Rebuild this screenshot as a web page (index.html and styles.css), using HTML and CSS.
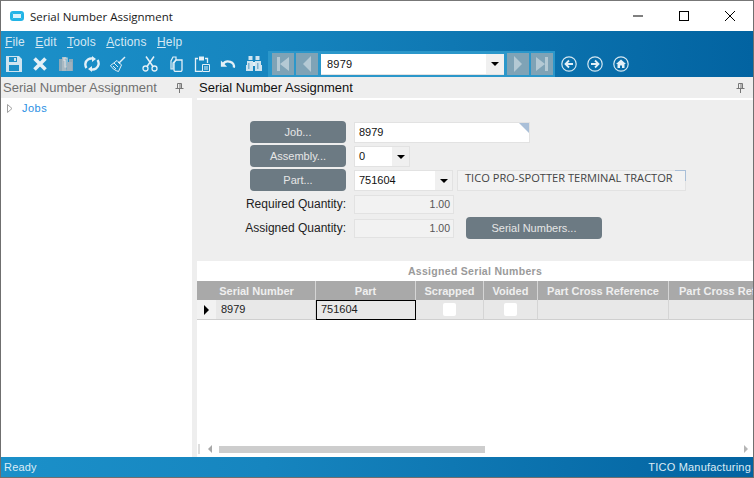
FILE: index.html
```html
<!DOCTYPE html>
<html lang="en">
<head>
<meta charset="utf-8">
<title>Serial Number Assignment</title>
<link rel="stylesheet" href="styles.css">
</head>
<body>
<div class="window">
  <header class="titlebar">
    <span class="app-icon"></span>
    <span class="app-title">Serial Number Assignment</span>
    <div class="win-controls">
      <svg class="win-btn" viewBox="0 0 46 30"><path d="M18 15h10" stroke="#000" fill="none"/></svg>
      <svg class="win-btn" viewBox="0 0 46 30"><rect x="18.5" y="10.5" width="9" height="9" stroke="#000" fill="none"/></svg>
      <svg class="win-btn" viewBox="0 0 46 30"><path d="M18 10l10 10M28 10l-10 10" stroke="#000" fill="none"/></svg>
    </div>
  </header>

  <div class="ribbon">
    <nav class="menu">
      <span class="menu-item"><u>F</u>ile</span>
      <span class="menu-item"><u>E</u>dit</span>
      <span class="menu-item"><u>T</u>ools</span>
      <span class="menu-item"><u>A</u>ctions</span>
      <span class="menu-item"><u>H</u>elp</span>
    </nav>
    <div class="toolbar">
      <span class="tool"><svg viewBox="0 0 16 16"><path class="ifill" fill-rule="evenodd" d="M0 0h13l3 3v13H0zM3 1v5h8V1zM3 9v6h10V9z"/><path class="ifill" d="M8 2h2v3H8z"/></svg></span>
      <span class="tool"><svg viewBox="0 0 16 16"><path d="M2.500 2.500l11 11M13.500 2.500l-11 11" stroke="#e4f0f7" stroke-width="3.600" fill="none"/></svg></span>
      <span class="tool"><svg viewBox="0 0 16 16"><path d="M1 3h3v12H1zM11 3h4v12h-4z" fill="#8fa9b8"/><path d="M4 1h4v14H4z" fill="#a9b9c2"/><path d="M6 5V2h3v9H7V4" stroke="#d5dde2" fill="none" stroke-width="1.200"/><path d="M9 6h5v9H8z" fill="#9fb2be"/></svg></span>
      <span class="tool"><svg viewBox="0 0 16 16"><path d="M2.500 12A6 6 0 0 1 4 3.500 6 6 0 0 1 8 2.500M13.500 4A6 6 0 0 1 12 12.500 6 6 0 0 1 8 13.500" stroke="#e4f0f7" stroke-width="2.400" fill="none"/><path d="M8 0v6l4-3zM8 16v-6l-4 3z" fill="#e4f0f7"/></svg></span>
      <span class="tool"><svg viewBox="0 0 16 16"><path d="M9 7l6-6" stroke="#e4f0f7" stroke-width="1.500" fill="none"/><path d="M7 4.500l4.500 4.500-3 6.500C6 15 1.500 12 .5 9.500z" fill="none" stroke="#e4f0f7"/><path d="M4 7l4 4M3 10l3 3M8 6l2 2" stroke="#e4f0f7" fill="none"/></svg></span>
      <span class="tool tool-group"><svg viewBox="0 0 16 16"><circle cx="3.500" cy="12.500" r="2.500" fill="none" stroke="#e4f0f7" stroke-width="1.300"/><circle cx="12.500" cy="12.500" r="2.500" fill="none" stroke="#e4f0f7" stroke-width="1.300"/><path d="M5 10.500L12 .5M11 10.500L4 .5" stroke="#e4f0f7" stroke-width="1.500" fill="none"/></svg></span>
      <span class="tool"><svg viewBox="0 0 16 16"><path d="M5 1h3v3L5 7v6H3V5z" fill="none" stroke="#e4f0f7" stroke-width="1.200"/><path d="M8 4h3l3 0v10a1.500 1.500 0 0 1-1.500 1.500h-5A1.500 1.500 0 0 1 6 14V7z" fill="none" stroke="#e4f0f7" stroke-width="1.300"/></svg></span>
      <span class="tool"><svg viewBox="0 0 16 16"><path d="M4 2.500H1.500v13H8M11 2.500h2.500V7" fill="none" stroke="#e4f0f7" stroke-width="1.300"/><path d="M5 .5h5v4H5z" fill="#e4f0f7"/><path d="M8.500 8.500h7v7h-7z" fill="none" stroke="#e4f0f7"/><path d="M10 11h4M10 13h4" stroke="#e4f0f7"/></svg></span>
      <span class="tool"><svg viewBox="0 0 18 16"><path d="M3.500 8A6.500 5.500 0 0 1 15.500 12" stroke="#e4f0f7" stroke-width="2.600" fill="none"/><path d="M1 4v7h7z" fill="#e4f0f7"/></svg></span>
      <span class="tool"><svg viewBox="0 0 16 16"><path class="ifill" d="M2.500 0h4v4h-4zM9.500 0h4v4h-4zM1 5h6v4H1zM9 5h6v4H9zM0 9h7v6H0zM9 9h7v6H9z"/><path d="M7 6h2v4H7z" fill="#e4f0f7"/><path d="M2 7h1.500v6H2zM11 7h1.500v6H11z" fill="#7fb2cf"/></svg></span>

      <div class="nav-box">
        <span class="nav-btn"><svg viewBox="0 0 22 22"><path class="nfill" d="M5 4h3v14H5zM17 4v14l-9-7z"/></svg></span>
        <span class="nav-btn"><svg viewBox="0 0 22 22"><path class="nfill" d="M15 3v16L7 11z"/></svg></span>
        <div class="nav-combo">
          <span class="nav-value">8979</span>
          <span class="nav-caret"></span>
        </div>
        <span class="nav-btn"><svg viewBox="0 0 22 22"><path class="nfill" d="M7 3v16l8-8z"/></svg></span>
        <span class="nav-btn"><svg viewBox="0 0 22 22"><path class="nfill" d="M5 4v14l9-7zM14 4h3v14h-3z"/></svg></span>
      </div>

      <div class="round-tools">
        <svg class="round" viewBox="0 0 16 16"><circle cx="8" cy="8" r="7.200" fill="none" stroke="#d5e8f2" stroke-width="1.200"/><path d="M12 8H5M8 4.500L4.500 8 8 11.500" fill="none" stroke="#e4f0f7" stroke-width="1.800"/></svg>
        <svg class="round" viewBox="0 0 16 16"><circle cx="8" cy="8" r="7.200" fill="none" stroke="#d5e8f2" stroke-width="1.200"/><path d="M4 8h7M8 4.500L11.500 8 8 11.500" fill="none" stroke="#e4f0f7" stroke-width="1.800"/></svg>
        <svg class="round" viewBox="0 0 16 16"><circle cx="8" cy="8" r="7.200" fill="none" stroke="#d5e8f2" stroke-width="1.200"/><path d="M8 3.500L3 8h1.500v4h2.500V9.500h2V12h2.500V8H13z" fill="#e4f0f7"/></svg>
      </div>
    </div>
  </div>

  <main class="workspace">
    <aside class="side">
      <div class="pane-head side-head">
        <span>Serial Number Assignment</span>
        <svg class="pin" viewBox="0 0 9 10"><path d="M2.500 .5h4v5h-4zM.5 5.500h8M4.500 6v4M5 1v4" fill="none" stroke="#777"/></svg>
      </div>
      <div class="tree">
        <svg class="tree-arrow" viewBox="0 0 6 9"><path d="M.5 .5l4.500 4-4.500 4z" fill="none" stroke="#a0a0a0"/></svg>
        <span class="tree-label">Jobs</span>
      </div>
    </aside>

    <section class="content">
      <div class="pane-head main-head">
        <span>Serial Number Assignment</span>
        <svg class="pin" viewBox="0 0 9 10"><path d="M2.500 .5h4v5h-4zM.5 5.500h8M4.500 6v4M5 1v4" fill="none" stroke="#777"/></svg>
      </div>

      <form class="form">
        <div class="form-row">
          <span class="btn btn-label">Job...</span>
          <div class="field field-job corner"><span>8979</span></div>
        </div>
        <div class="form-row">
          <span class="btn btn-label">Assembly...</span>
          <div class="field field-asm"><span>0</span><span class="caret-box"><i class="caret"></i></span></div>
        </div>
        <div class="form-row">
          <span class="btn btn-label">Part...</span>
          <div class="field field-part"><span>751604</span><span class="caret-box"><i class="caret"></i></span></div>
          <div class="desc">TICO PRO-SPOTTER TERMINAL TRACTOR</div>
        </div>
        <div class="form-row">
          <label class="qty-label">Required Quantity:</label>
          <div class="qty">1.00</div>
        </div>
        <div class="form-row">
          <label class="qty-label">Assigned Quantity:</label>
          <div class="qty">1.00</div>
          <span class="btn btn-serial">Serial Numbers...</span>
        </div>
      </form>

      <div class="grid-panel">
        <div class="grid-title">Assigned Serial Numbers</div>
        <div class="grid">
          <div class="gh gh-serial">Serial Number</div>
          <div class="gh">Part</div>
          <div class="gh">Scrapped</div>
          <div class="gh">Voided</div>
          <div class="gh">Part Cross Reference</div>
          <div class="gh gh-clip">Part Cross Reference</div>

          <div class="gc gc-mark"><i class="row-mark"></i></div>
          <div class="gc gc-text">8979</div>
          <div class="gc gc-text gc-active">751604</div>
          <div class="gc gc-check"><i class="check"></i></div>
          <div class="gc gc-check"><i class="check"></i></div>
          <div class="gc"></div>
          <div class="gc"></div>
        </div>
        <div class="hscroll">
          <i class="sb-stub"></i>
          <i class="sb-left"></i>
          <i class="sb-thumb"></i>
          <i class="sb-right"></i>
        </div>
      </div>
    </section>
  </main>

  <footer class="status">
    <span>Ready</span>
    <span>TICO Manufacturing</span>
  </footer>
</div>
</body>
</html>
```

FILE: styles.css
```css
* { box-sizing: border-box; }
html, body { margin: 0; padding: 0; background: #fff; }
body { font-family: "Liberation Sans", Arial, sans-serif; font-size: 12px; color: #222; }

.window {
  width: 754px;
  height: 478px;
  display: flex;
  flex-direction: column;
  border: 1px solid #6f6f6f;
  border-top-color: #777;
  overflow: hidden;
  background: #fff;
}

.titlebar {
  height: 30px;
  flex: none;
  display: flex;
  align-items: center;
  background: #fff;
  padding-left: 9px;
}
.app-icon {
  width: 14px;
  height: 10px;
  border: 2px solid #22b4e6;
  border-radius: 3px;
  background: #d9f2fb;
  box-shadow: inset 0 0 0 1px #22b4e6;
}
.app-title {
  margin-left: 6px;
  font-family: "Open Sans", sans-serif;
  font-size: 11.500px;
  color: #1a1a1a;
}
.win-controls { margin-left: auto; display: flex; }
.win-btn { width: 46px; height: 30px; display: block; }

.ribbon {
  height: 46px;
  flex: none;
  background: linear-gradient(90deg, #1b90c9 0%, #1685bf 35%, #0f78b3 60%, #0263a1 100%);
}
.menu {
  height: 20px;
  display: flex;
  align-items: center;
  padding: 2px 0 0 4px;
  gap: 10.400px;
}
.menu-item { color: #d5e8f3; font-size: 12px; letter-spacing: .15px; }

.toolbar { height: 26px; display: flex; align-items: flex-start; }
.tool {
  width: 26px;
  height: 26px;
  display: flex;
  align-items: center;
  justify-content: center;
  flex: none;
}
.tool svg { width: 16px; height: 16px; display: block; }
.tool-group { margin-left: 6px; }
.ifill { fill: #cfe4f0; }
.nfill { fill: #b4c9d4; }

.nav-box {
  width: 287px;
  height: 26px;
  margin-left: 1px;
  background: #2b97ca;
  display: flex;
  align-items: center;
  padding: 0 3px 0 4px;
  gap: 2px;
  flex: none;
}
.nav-btn {
  width: 22px;
  height: 22px;
  background: #7fa3b6;
  display: block;
  flex: none;
}
.nav-btn svg { width: 22px; height: 22px; display: block; }
.nav-combo {
  width: 183px;
  height: 21px;
  margin: 0 1px;
  background: #fff;
  border-bottom: 1px solid #e3e3e3;
  display: flex;
  align-items: center;
  justify-content: space-between;
  flex: none;
}
.nav-value { padding-left: 6px; color: #111; font-size: 11px; letter-spacing: .2px; }
.nav-caret {
  width: 18px;
  height: 20px;
  background: #f0f0f0;
  position: relative;
}
.nav-caret::after, .caret {
  content: "";
  position: absolute;
  left: 5px;
  top: 8px;
  border-left: 4px solid transparent;
  border-right: 4px solid transparent;
  border-top: 4px solid #000;
}

.round-tools {
  display: flex;
  gap: 10px;
  margin-left: 6px;
  padding-top: 5px;
}
.round { width: 16px; height: 16px; display: block; }

.workspace { flex: 1; min-height: 0; display: flex; }

.side { width: 191px; flex: none; background: #fff; }
.pane-head {
  height: 21px;
  background: #eee;
  display: flex;
  align-items: center;
  justify-content: space-between;
  font-size: 13px;
}
.side-head { padding: 0 8px 0 2px; color: #707070; }
.main-head { padding: 0 8px 0 2px; color: #111; }
.pin { width: 9px; height: 10px; display: block; }

.tree { display: flex; align-items: center; padding: 4px 0 0 6px; }
.tree-arrow { width: 6px; height: 9px; display: block; }
.tree-label { margin-left: 9px; color: #2b8fe3; font-size: 11px; letter-spacing: .5px; }

.content {
  flex: 1;
  min-width: 0;
  display: flex;
  flex-direction: column;
  border-left: 5px solid #eee;
}

.form {
  margin-top: 2px;
  height: 161px;
  flex: none;
  background: #eee;
  padding: 20px 0 0 53px;
  display: flex;
  flex-direction: column;
}
.form-row { height: 24px; display: flex; align-items: center; gap: 8px; }

.btn {
  display: flex;
  align-items: center;
  justify-content: center;
  height: 22px;
  background: #6c7a83;
  border-radius: 4px;
  color: #e6e6e6;
  font-size: 11px;
}
.btn-label { width: 96px; flex: none; }
.btn-serial { width: 136px; margin-left: 4px; }

.field {
  height: 21px;
  background: #fff;
  border: 1px solid #e2e2e2;
  display: flex;
  align-items: center;
  justify-content: space-between;
  padding-left: 4px;
  color: #111;
  font-size: 11px;
  position: relative;
}
.field-job { width: 176px; }
.field-asm { width: 56px; }
.field-part { width: 99px; }
.corner::after {
  content: "";
  position: absolute;
  top: 0;
  right: 0;
  border-top: 10px solid #a9bfd8;
  border-left: 10px solid transparent;
}
.caret-box {
  width: 17px;
  height: 19px;
  background: #f0f0f0;
  position: relative;
  flex: none;
}
.desc {
  width: 229px;
  height: 21px;
  margin-left: -4px;
  background: #f2f2f2;
  border: 1px solid #e2e2e2;
  padding: 0 0 0 7px;
  font-family: "Open Sans", sans-serif;
  font-size: 11.100px;
  color: #444;
  line-height: 13px;
  white-space: nowrap;
  position: relative;
}
.desc::after {
  content: "";
  position: absolute;
  top: -1px;
  right: -1px;
  width: 10px;
  height: 10px;
  border-top: 1px solid #a9bfd8;
  border-right: 1px solid #a9bfd8;
}
.qty-label {
  width: 96px;
  flex: none;
  display: flex;
  justify-content: flex-end;
  white-space: nowrap;
  font-size: 12px;
  color: #222;
  margin-right: 0;
}
.qty {
  width: 100px;
  height: 19px;
  background: #f2f2f2;
  border: 1px solid #e2e2e2;
  text-align: right;
  padding-right: 3px;
  line-height: 16px;
  color: #555;
  font-size: 10.500px;
}

.grid-panel {
  flex: 1;
  min-height: 0;
  display: flex;
  flex-direction: column;
  background: #fff;
  overflow: hidden;
}
.grid-title {
  height: 20px;
  padding-top: 4px;
  text-align: center;
  font-size: 10.500px;
  font-weight: bold;
  color: #9a9a9a;
  letter-spacing: .3px;
  flex: none;
}
.grid {
  display: grid;
  grid-template-columns: 19px 100px 100px 68px 54px 131px 200px;
  grid-template-rows: 19px 20px;
  flex: none;
}
.gh {
  background: #a9a9a9;
  border-right: 1px solid #d5d5d5;
  color: #efefef;
  font-size: 11px;
  font-weight: bold;
  display: flex;
  align-items: center;
  justify-content: center;
  white-space: nowrap;
  overflow: hidden;
}
.gh-serial { grid-column: span 2; padding-left: 1px; }
.gh-clip { justify-content: flex-start; padding-left: 10px; border-right: 0; }
.gc {
  background: #e8e8e8;
  border-right: 1px solid #d5d5d5;
  border-bottom: 1px solid #cfcfcf;
  display: flex;
  align-items: center;
  font-size: 11px;
  color: #222;
  padding-bottom: 2px;
}
.gc-mark { background: #f2f2f2; justify-content: center; border-right: 0; padding-bottom: 0; }
.row-mark {
  border-top: 5px solid transparent;
  border-bottom: 5px solid transparent;
  border-left: 5px solid #000;
  display: block;
}
.gc-text { padding-left: 5px; }
.gc-active { border: 1px solid #000; padding-left: 4px; }
.gc-check { justify-content: center; padding-bottom: 0; }
.check {
  width: 13px;
  height: 13px;
  display: block;
  background: #fff;
  border-radius: 2px;
}

.hscroll {
  margin-top: auto;
  height: 16px;
  flex: none;
  display: flex;
  align-items: center;
  padding-left: 1px;
  position: relative;
}
.sb-stub { width: 2px; height: 10px; background: #ddd; display: block; flex: none; }
.sb-left {
  margin-left: 8px;
  border-top: 4px solid transparent;
  border-bottom: 4px solid transparent;
  border-right: 4px solid #a8a8a8;
  display: block;
  flex: none;
}
.sb-thumb { margin-left: 7px; width: 266px; height: 7px; background: #cdcdcd; display: block; flex: none; }
.sb-right {
  margin-left: auto;
  margin-right: 5px;
  border-top: 4px solid transparent;
  border-bottom: 4px solid transparent;
  border-left: 4px solid #b5b5b5;
  display: block;
  flex: none;
}

.status {
  height: 20px;
  flex: none;
  display: flex;
  align-items: center;
  justify-content: space-between;
  padding: 0 2px 0 3px;
  background: linear-gradient(90deg, #1b90c9 0%, #1685bf 35%, #0f78b3 60%, #0263a1 100%);
  color: #dcecf5;
  font-size: 11px;
  letter-spacing: .2px;
}
```
